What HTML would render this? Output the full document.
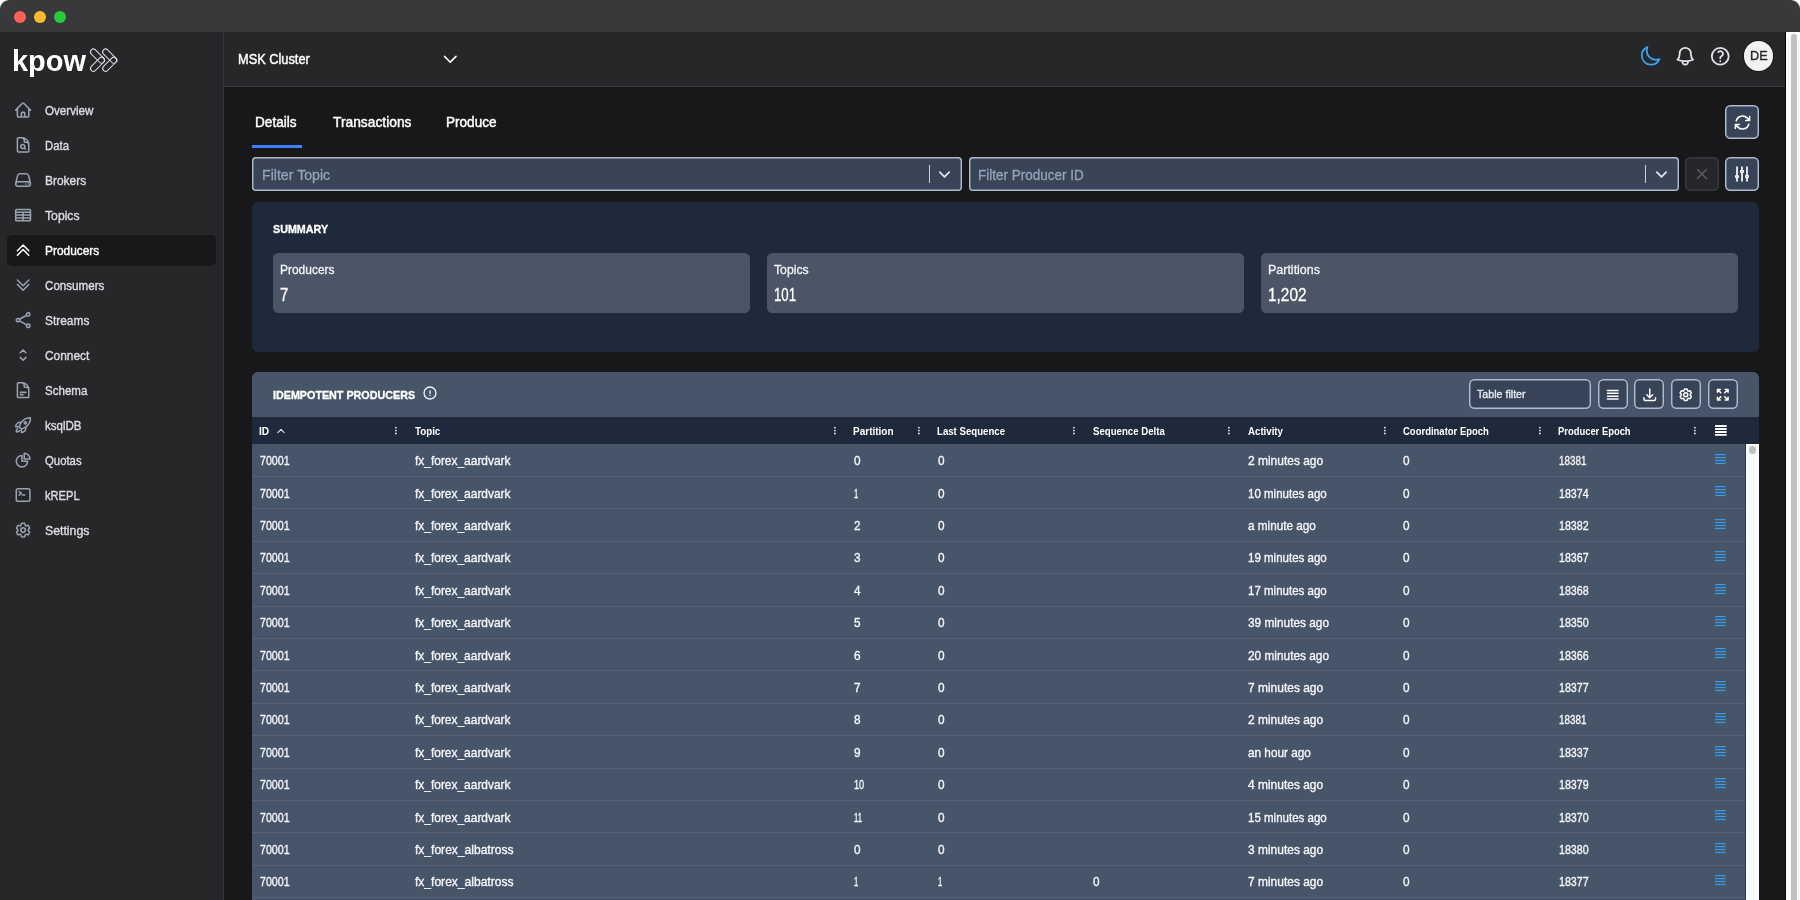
<!DOCTYPE html>
<html lang="en"><head><meta charset="utf-8"><title>Kpow - Producers</title>
<style>
html,body{margin:0;padding:0;background:#fff;}
body{width:1800px;height:900px;overflow:hidden;position:relative;font-family:"Liberation Sans",sans-serif;}
#app{position:absolute;left:0;top:0;width:1800px;height:900px;overflow:hidden;will-change:transform;}
#app>div,#app>svg,#app>span{position:absolute;}
.t{white-space:nowrap;line-height:1;transform-origin:0 50%;display:block;}
</style></head>
<body><div id="app">
<div style="left:0px;top:0px;width:1800px;height:32px;background:#38393b;border-radius:9px 9px 0 0;"></div>
<div style="left:14px;top:11px;width:12px;height:12px;background:#ff5f57;border-radius:50%;"></div>
<div style="left:34px;top:11px;width:12px;height:12px;background:#febc2e;border-radius:50%;"></div>
<div style="left:54px;top:11px;width:12px;height:12px;background:#28c840;border-radius:50%;"></div>
<div style="left:0px;top:32px;width:224px;height:868px;background:#27272a;"></div>
<div style="left:223px;top:32px;width:1px;height:868px;background:#37373b;"></div>
<div style="left:224px;top:32px;width:1562px;height:53.5px;background:#27272a;"></div>
<div style="left:224px;top:85.5px;width:1562px;height:1px;background:#3a3a3e;"></div>
<div style="left:224px;top:86.5px;width:1562px;height:813.5px;background:#18181b;"></div>
<div style="left:1785px;top:32px;width:1px;height:868px;background:#050506;"></div>
<div style="left:1786px;top:32px;width:14px;height:868px;background:#fafafa;"></div>
<div style="left:1790.6px;top:34.2px;width:6.4px;height:870px;background:#c1c1c1;border-radius:3.2px;"></div>
<span class="t" style="left:12.20px;top:45.91px;font-size:30px;color:#fff;transform:scaleX(0.9635);font-weight:700;">kpow</span>
<svg style="left:86px;top:44px" width="38" height="32" viewBox="86 44 38 32" fill="none" stroke="#dcdce0" stroke-width="1.05">
<g id="chv"><rect x="-8.7" y="-2.9" width="17.4" height="5.8" rx="2.9" transform="translate(97.5 56.1) rotate(45)"/>
<rect x="-8.7" y="-2.9" width="17.4" height="5.8" rx="2.9" transform="translate(97.5 64.3) rotate(-45)"/></g>
<use href="#chv" x="12.2"/></svg>
<svg style="left:13.70px;top:101.20px" width="18.2" height="18.2" viewBox="0 0 24 24" fill="none" stroke="#9aa3b2" stroke-width="2.0" stroke-linecap="round" stroke-linejoin="round"><path d="M2.25 12l8.954-8.955c.44-.439 1.152-.439 1.591 0L21.75 12M4.5 9.75v10.125c0 .621.504 1.125 1.125 1.125H9.75v-4.875c0-.621.504-1.125 1.125-1.125h2.25c.621 0 1.125.504 1.125 1.125V21h4.125c.621 0 1.125-.504 1.125-1.125V9.75M8.25 21h8.25"/></svg>
<span class="t" style="left:45.20px;top:104.26px;font-size:13.4px;color:#dddde1;transform:scaleX(0.8662);-webkit-text-stroke:0.4px #dddde1;">Overview</span>
<svg style="left:13.70px;top:136.20px" width="18.2" height="18.2" viewBox="0 0 24 24" fill="none" stroke="#9aa3b2" stroke-width="2.0" stroke-linecap="round" stroke-linejoin="round"><path d="M19.5 14.25v-2.625a3.375 3.375 0 00-3.375-3.375h-1.5A1.125 1.125 0 0113.5 7.125v-1.5a3.375 3.375 0 00-3.375-3.375H8.25m5.231 13.481L15 17.25m-4.5-15H5.625c-.621 0-1.125.504-1.125 1.125v16.5c0 .621.504 1.125 1.125 1.125h12.75c.621 0 1.125-.504 1.125-1.125V11.25a9 9 0 00-9-9zm3.75 11.625a2.625 2.625 0 11-5.25 0 2.625 2.625 0 015.25 0z"/></svg>
<span class="t" style="left:45.20px;top:139.26px;font-size:13.4px;color:#dddde1;transform:scaleX(0.8468);-webkit-text-stroke:0.4px #dddde1;">Data</span>
<svg style="left:13.70px;top:171.20px" width="18.2" height="18.2" viewBox="0 0 24 24" fill="none" stroke="#9aa3b2" stroke-width="2.0" stroke-linecap="round" stroke-linejoin="round"><path d="M21.75 17.25v-.228a4.5 4.5 0 00-.12-1.03l-2.268-9.64a3.375 3.375 0 00-3.285-2.602H7.923a3.375 3.375 0 00-3.285 2.602l-2.268 9.64a4.5 4.5 0 00-.12 1.03v.228m19.5 0a3 3 0 01-3 3H5.25a3 3 0 01-3-3m19.5 0a3 3 0 00-3-3H5.25a3 3 0 00-3 3m16.5 0h.008v.008h-.008v-.008zm-3 0h.008v.008h-.008v-.008z"/></svg>
<span class="t" style="left:45.20px;top:174.26px;font-size:13.4px;color:#dddde1;transform:scaleX(0.8925);-webkit-text-stroke:0.4px #dddde1;">Brokers</span>
<svg style="left:13.70px;top:206.20px" width="18.2" height="18.2" viewBox="0 0 24 24" fill="none" stroke="#9aa3b2" stroke-width="2.0" stroke-linecap="round" stroke-linejoin="round"><path d="M3.375 4.5h17.25c.621 0 1.125.504 1.125 1.125v12.75c0 .621-.504 1.125-1.125 1.125H3.375a1.125 1.125 0 01-1.125-1.125V5.625c0-.621.504-1.125 1.125-1.125zM2.25 8.25h19.5M2.25 12h19.5M2.25 15.75h19.5M12 8.25V19.5"/></svg>
<span class="t" style="left:45.20px;top:209.26px;font-size:13.4px;color:#dddde1;transform:scaleX(0.9108);-webkit-text-stroke:0.4px #dddde1;">Topics</span>
<div style="left:7px;top:235px;width:209px;height:31px;background:#18181b;border-radius:5px;"></div>
<svg style="left:13.70px;top:241.20px" width="18.2" height="18.2" viewBox="0 0 24 24" fill="none" stroke="#fff" stroke-width="2.0" stroke-linecap="round" stroke-linejoin="round"><path d="M4.5 12.75l7.5-7.5 7.5 7.5m-15 6l7.5-7.5 7.5 7.5"/></svg>
<span class="t" style="left:45.20px;top:244.26px;font-size:13.4px;color:#fff;transform:scaleX(0.8886);-webkit-text-stroke:0.4px #fff;">Producers</span>
<svg style="left:13.70px;top:276.20px" width="18.2" height="18.2" viewBox="0 0 24 24" fill="none" stroke="#9aa3b2" stroke-width="2.0" stroke-linecap="round" stroke-linejoin="round"><path d="M19.5 5.25l-7.5 7.5-7.5-7.5m15 6l-7.5 7.5-7.5-7.5"/></svg>
<span class="t" style="left:45.20px;top:279.26px;font-size:13.4px;color:#dddde1;transform:scaleX(0.8666);-webkit-text-stroke:0.4px #dddde1;">Consumers</span>
<svg style="left:13.70px;top:311.20px" width="18.2" height="18.2" viewBox="0 0 24 24" fill="none" stroke="#9aa3b2" stroke-width="2.0" stroke-linecap="round" stroke-linejoin="round"><path d="M7.217 10.907a2.25 2.25 0 100 2.186m0-2.186c.18.324.283.696.283 1.093s-.103.77-.283 1.093m0-2.186l9.566-5.314m-9.566 7.5l9.566 5.314m0 0a2.25 2.25 0 103.935 2.186 2.25 2.25 0 00-3.935-2.186zm0-12.814a2.25 2.25 0 103.933-2.185 2.25 2.25 0 00-3.933 2.185z"/></svg>
<span class="t" style="left:45.20px;top:314.26px;font-size:13.4px;color:#dddde1;transform:scaleX(0.8895);-webkit-text-stroke:0.4px #dddde1;">Streams</span>
<svg style="left:13.70px;top:346.20px" width="18.2" height="18.2" viewBox="0 0 24 24" fill="none" stroke="#9aa3b2" stroke-width="2.0" stroke-linecap="round" stroke-linejoin="round"><path d="M8.25 15L12 18.75 15.75 15m-7.5-6L12 5.25 15.75 9"/></svg>
<span class="t" style="left:45.20px;top:349.26px;font-size:13.4px;color:#dddde1;transform:scaleX(0.8895);-webkit-text-stroke:0.4px #dddde1;">Connect</span>
<svg style="left:13.70px;top:381.20px" width="18.2" height="18.2" viewBox="0 0 24 24" fill="none" stroke="#9aa3b2" stroke-width="2.0" stroke-linecap="round" stroke-linejoin="round"><path d="M19.5 14.25v-2.625a3.375 3.375 0 00-3.375-3.375h-1.5A1.125 1.125 0 0113.5 7.125v-1.5a3.375 3.375 0 00-3.375-3.375H8.25m0 12.75h7.5m-7.5 3H12M10.5 2.25H5.625c-.621 0-1.125.504-1.125 1.125v17.25c0 .621.504 1.125 1.125 1.125h12.75c.621 0 1.125-.504 1.125-1.125V11.25a9 9 0 00-9-9z"/></svg>
<span class="t" style="left:45.20px;top:384.26px;font-size:13.4px;color:#dddde1;transform:scaleX(0.8622);-webkit-text-stroke:0.4px #dddde1;">Schema</span>
<svg style="left:13.70px;top:416.20px" width="18.2" height="18.2" viewBox="0 0 24 24" fill="none" stroke="#9aa3b2" stroke-width="2.0" stroke-linecap="round" stroke-linejoin="round"><path d="M15.59 14.37a6 6 0 01-5.84 7.38v-4.8m5.84-2.58a14.98 14.98 0 006.16-12.12A14.98 14.98 0 009.631 8.41m5.96 5.96a14.926 14.926 0 01-5.841 2.58m-.119-8.54a6 6 0 00-7.381 5.84h4.8m2.581-5.84a14.927 14.927 0 00-2.58 5.84m2.699 2.7c-.103.021-.207.041-.311.06a15.09 15.09 0 01-2.448-2.448 14.9 14.9 0 01.06-.312m-2.24 2.39a4.493 4.493 0 00-1.757 4.306 4.493 4.493 0 004.306-1.758M16.5 9a1.5 1.5 0 11-3 0 1.5 1.5 0 013 0z"/></svg>
<span class="t" style="left:45.20px;top:419.26px;font-size:13.4px;color:#dddde1;transform:scaleX(0.8616);-webkit-text-stroke:0.4px #dddde1;">ksqlDB</span>
<svg style="left:13.70px;top:451.20px" width="18.2" height="18.2" viewBox="0 0 24 24" fill="none" stroke="#9aa3b2" stroke-width="2.0" stroke-linecap="round" stroke-linejoin="round"><path d="M10.5 6a7.5 7.5 0 107.5 7.5h-7.5V6z"/><path d="M13.5 10.5H21A7.5 7.5 0 0013.5 3v7.5z"/></svg>
<span class="t" style="left:45.20px;top:454.26px;font-size:13.4px;color:#dddde1;transform:scaleX(0.8469);-webkit-text-stroke:0.4px #dddde1;">Quotas</span>
<svg style="left:13.70px;top:486.20px" width="18.2" height="18.2" viewBox="0 0 24 24" fill="none" stroke="#9aa3b2" stroke-width="2.0" stroke-linecap="round" stroke-linejoin="round"><path d="M6.75 7.5l3 2.25-3 2.25m4.5 0h3m-9 8.25h13.5A2.25 2.25 0 0021 18V6a2.25 2.25 0 00-2.25-2.25H5.25A2.25 2.25 0 003 6v12a2.25 2.25 0 002.25 2.25z"/></svg>
<span class="t" style="left:45.20px;top:489.26px;font-size:13.4px;color:#dddde1;transform:scaleX(0.8303);-webkit-text-stroke:0.4px #dddde1;">kREPL</span>
<svg style="left:13.70px;top:521.20px" width="18.2" height="18.2" viewBox="0 0 24 24" fill="none" stroke="#9aa3b2" stroke-width="2.0" stroke-linecap="round" stroke-linejoin="round"><path d="M9.594 3.94c.09-.542.56-.94 1.11-.94h2.593c.55 0 1.02.398 1.11.94l.213 1.281c.063.374.313.686.645.87.074.04.147.083.22.127.324.196.72.257 1.075.124l1.217-.456a1.125 1.125 0 011.37.49l1.296 2.247a1.125 1.125 0 01-.26 1.431l-1.003.827c-.293.24-.438.613-.431.992a6.759 6.759 0 010 .255c-.007.378.138.75.43.99l1.005.828c.424.35.534.954.26 1.43l-1.298 2.247a1.125 1.125 0 01-1.369.491l-1.217-.456c-.355-.133-.75-.072-1.076.124a6.57 6.57 0 01-.22.128c-.331.183-.581.495-.644.869l-.213 1.28c-.09.543-.56.941-1.11.941h-2.594c-.55 0-1.02-.398-1.11-.94l-.213-1.281c-.062-.374-.312-.686-.644-.87a6.52 6.52 0 01-.22-.127c-.325-.196-.72-.257-1.076-.124l-1.217.456a1.125 1.125 0 01-1.369-.49l-1.297-2.247a1.125 1.125 0 01.26-1.431l1.004-.827c.292-.24.437-.613.43-.992a6.932 6.932 0 010-.255c.007-.378-.138-.75-.43-.99l-1.004-.828a1.125 1.125 0 01-.26-1.43l1.297-2.247a1.125 1.125 0 011.37-.491l1.216.456c.356.133.751.072 1.076-.124.072-.044.146-.087.22-.128.332-.183.582-.495.644-.869l.214-1.281z"/><path d="M15 12a3 3 0 11-6 0 3 3 0 016 0z"/></svg>
<span class="t" style="left:45.20px;top:524.26px;font-size:13.4px;color:#dddde1;transform:scaleX(0.9166);-webkit-text-stroke:0.4px #dddde1;">Settings</span>
<span class="t" style="left:238.03px;top:50.66px;font-size:15.4px;color:#fff;transform:scaleX(0.8309);-webkit-text-stroke:0.45px #fff;">MSK Cluster</span>
<svg style="left:440.75px;top:49.95px" width="18.5" height="18.5" viewBox="0 0 24 24" fill="none" stroke="#fff" stroke-width="2.0" stroke-linecap="round" stroke-linejoin="round"><path d="M19.5 8.25l-7.5 7.5-7.5-7.5"/></svg>
<svg style="left:1639.25px;top:44.75px" width="22.5" height="22.5" viewBox="0 0 24 24" fill="none" stroke="#38a5f0" stroke-width="1.9" stroke-linecap="round" stroke-linejoin="round"><path d="M21.752 15.002A9.718 9.718 0 0118 15.75c-5.385 0-9.75-4.365-9.75-9.75 0-1.33.266-2.597.748-3.752A9.753 9.753 0 003 11.25C3 16.635 7.365 21 12.75 21a9.753 9.753 0 009.002-5.998z"/></svg>
<svg style="left:1674.25px;top:44.75px" width="22.5" height="22.5" viewBox="0 0 24 24" fill="none" stroke="#e4e4e7" stroke-width="1.9" stroke-linecap="round" stroke-linejoin="round"><path d="M14.857 17.082a23.848 23.848 0 005.454-1.31A8.967 8.967 0 0118 9.75v-.7V9A6 6 0 006 9v.75a8.967 8.967 0 01-2.312 6.022c1.733.64 3.56 1.085 5.455 1.31m5.714 0a24.255 24.255 0 01-5.714 0m5.714 0a3 3 0 11-5.714 0"/></svg>
<svg style="left:1708.75px;top:44.75px" width="22.5" height="22.5" viewBox="0 0 24 24" fill="none" stroke="#e4e4e7" stroke-width="1.9" stroke-linecap="round" stroke-linejoin="round"><path d="M9.879 7.519c1.171-1.025 3.071-1.025 4.242 0 1.172 1.025 1.172 2.687 0 3.712-.203.179-.43.326-.67.442-.745.361-1.45.999-1.45 1.827v.75M21 12a9 9 0 11-18 0 9 9 0 0118 0zm-9 5.25h.008v.008H12v-.008z"/></svg>
<div style="left:1743.7px;top:41.2px;width:29.6px;height:29.6px;background:#f1f1f2;border-radius:50%;box-shadow:0 0 0 1px #19191c;"></div>
<span class="t" style="left:1749.77px;top:49.66px;font-size:12.8px;color:#27272a;transform:scaleX(0.9920);-webkit-text-stroke:0.35px #27272a;">DE</span>
<span class="t" style="left:255.32px;top:114.20px;font-size:15px;color:#fff;transform:scaleX(0.9067);-webkit-text-stroke:0.45px #fff;">Details</span>
<span class="t" style="left:332.62px;top:114.20px;font-size:15px;color:#fff;transform:scaleX(0.9203);-webkit-text-stroke:0.45px #fff;">Transactions</span>
<span class="t" style="left:446.33px;top:114.20px;font-size:15px;color:#fff;transform:scaleX(0.9047);-webkit-text-stroke:0.45px #fff;">Produce</span>
<div style="left:252px;top:145px;width:49.7px;height:2.8px;background:#3b82f6;"></div>
<div style="left:1725px;top:105px;width:34px;height:34px;background:#374357;box-shadow:inset 0 0 0 1.45px #aebbcf;border-radius:5.5px;"></div>
<svg style="left:1732.50px;top:112.50px" width="19" height="19" viewBox="0 0 24 24" fill="none" stroke="#fff" stroke-width="1.9" stroke-linecap="round" stroke-linejoin="round"><path d="M16.023 9.348h4.992v-.001M2.985 19.644v-4.992m0 0h4.992m-4.993 0l3.181 3.183a8.25 8.25 0 0013.803-3.7M4.031 9.865a8.25 8.25 0 0113.803-3.7l3.181 3.182m0-4.991v4.99"/></svg>
<div style="left:252px;top:157px;width:710px;height:34px;background:#394456;box-shadow:inset 0 0 0 1.45px #aebbcf;border-radius:5.5px;border-radius:4px;"></div>
<span class="t" style="left:261.75px;top:167.84px;font-size:14.6px;color:#94a3b8;transform:scaleX(0.9701);-webkit-text-stroke:0.3px #94a3b8;">Filter Topic</span>
<div style="left:928.5px;top:165px;width:1px;height:18px;background:#cbd5e1;"></div>
<svg style="left:937.00px;top:167.10px" width="15" height="15" viewBox="0 0 24 24" fill="none" stroke="#e2e8f0" stroke-width="2.7" stroke-linecap="round" stroke-linejoin="round"><path d="M19.5 8.25l-7.5 7.5-7.5-7.5"/></svg>
<div style="left:968.5px;top:157px;width:710.5px;height:34px;background:#394456;box-shadow:inset 0 0 0 1.45px #aebbcf;border-radius:5.5px;border-radius:4px;"></div>
<span class="t" style="left:978.45px;top:167.84px;font-size:14.6px;color:#94a3b8;transform:scaleX(0.9240);-webkit-text-stroke:0.3px #94a3b8;">Filter Producer ID</span>
<div style="left:1645px;top:165px;width:1px;height:18px;background:#cbd5e1;"></div>
<svg style="left:1654.00px;top:167.10px" width="15" height="15" viewBox="0 0 24 24" fill="none" stroke="#e2e8f0" stroke-width="2.7" stroke-linecap="round" stroke-linejoin="round"><path d="M19.5 8.25l-7.5 7.5-7.5-7.5"/></svg>
<div style="left:1685.2px;top:157px;width:34px;height:34px;background:#26272b;box-shadow:inset 0 0 0 1.45px #39393e;border-radius:5.5px;"></div>
<svg style="left:1693.00px;top:165.00px" width="18" height="18" viewBox="0 0 24 24" fill="none" stroke="#5d5d64" stroke-width="1.9" stroke-linecap="round" stroke-linejoin="round"><path d="M6 18L18 6M6 6l12 12"/></svg>
<div style="left:1725px;top:157px;width:34px;height:34px;background:#374357;box-shadow:inset 0 0 0 1.45px #aebbcf;border-radius:5.5px;"></div>
<svg style="left:1732.40px;top:164.00px" width="20" height="20" viewBox="0 0 24 24" fill="none" stroke="#fff" stroke-width="2.0" stroke-linecap="round" stroke-linejoin="round"><path d="M6 13.5V3.75m0 9.75a1.5 1.5 0 010 3m0-3a1.5 1.5 0 000 3m0 3.75V16.5m12-3V3.75m0 9.75a1.5 1.5 0 010 3m0-3a1.5 1.5 0 000 3m0 3.75V16.5m-6-9V3.75m0 3.75a1.5 1.5 0 010 3m0-3a1.5 1.5 0 000 3m0 9.75V10.5"/></svg>
<div style="left:252px;top:201.5px;width:1507px;height:150.5px;background:#1e293b;border-radius:6px;"></div>
<span class="t" style="left:273.28px;top:223.00px;font-size:11.7px;color:#fff;transform:scaleX(0.9188);font-weight:700;-webkit-text-stroke:0.35px #fff;">SUMMARY</span>
<div style="left:273px;top:253px;width:477px;height:60.3px;background:#4b5565;border-radius:5.5px;"></div>
<span class="t" style="left:280.35px;top:263.49px;font-size:13.6px;color:#f1f5f9;transform:scaleX(0.8804);-webkit-text-stroke:0.3px #f1f5f9;">Producers</span>
<span class="t" style="left:280.35px;top:286.11px;font-size:18.3px;color:#fff;transform:scaleX(0.8172);-webkit-text-stroke:0.3px #fff;">7</span>
<div style="left:767px;top:253px;width:477px;height:60.3px;background:#4b5565;border-radius:5.5px;"></div>
<span class="t" style="left:774.35px;top:263.49px;font-size:13.6px;color:#f1f5f9;transform:scaleX(0.9000);-webkit-text-stroke:0.3px #f1f5f9;">Topics</span>
<span class="t" style="left:774.35px;top:286.11px;font-size:18.3px;color:#fff;transform:scaleX(0.7231);-webkit-text-stroke:0.3px #fff;">101</span>
<div style="left:1261px;top:253px;width:477px;height:60.3px;background:#4b5565;border-radius:5.5px;"></div>
<span class="t" style="left:1268.35px;top:263.49px;font-size:13.6px;color:#f1f5f9;transform:scaleX(0.9169);-webkit-text-stroke:0.3px #f1f5f9;">Partitions</span>
<span class="t" style="left:1268.35px;top:286.11px;font-size:18.3px;color:#fff;transform:scaleX(0.8442);-webkit-text-stroke:0.3px #fff;">1,202</span>
<div style="left:252px;top:372.3px;width:1507px;height:527.7px;background:#475569;border-radius:6px 6px 0 0;"></div>
<span class="t" style="left:273.48px;top:389.30px;font-size:11.7px;color:#fff;transform:scaleX(0.9193);font-weight:700;-webkit-text-stroke:0.35px #fff;">IDEMPOTENT PRODUCERS</span>
<svg style="left:421.90px;top:384.90px" width="16" height="16" viewBox="0 0 24 24" fill="none" stroke="#eef2f7" stroke-width="2.0" stroke-linecap="round" stroke-linejoin="round"><path d="M12 9v3.75m9-.75a9 9 0 11-18 0 9 9 0 0118 0zm-9 3.75h.008v.008H12v-.008z"/></svg>
<div style="left:1469px;top:379.3px;width:121.7px;height:30px;background:#374357;box-shadow:inset 0 0 0 1.45px #aebbcf;border-radius:5.5px;"></div>
<span class="t" style="left:1477.00px;top:389.31px;font-size:11.8px;color:#e2e8f0;transform:scaleX(0.9032);-webkit-text-stroke:0.4px #e2e8f0;">Table filter</span>
<div style="left:1597.7px;top:379.3px;width:30px;height:30px;background:#374357;box-shadow:inset 0 0 0 1.45px #aebbcf;border-radius:5.5px;"></div>
<svg style="left:1604.95px;top:387.25px" width="15.5" height="15.5" viewBox="0 0 24 24" fill="none" stroke="#fff" stroke-width="2.3" stroke-linecap="round" stroke-linejoin="round"><path d="M3.75 5.25h16.5m-16.5 4.5h16.5m-16.5 4.5h16.5m-16.5 4.5h16.5"/></svg>
<div style="left:1634.4px;top:379.3px;width:30px;height:30px;background:#374357;box-shadow:inset 0 0 0 1.45px #aebbcf;border-radius:5.5px;"></div>
<svg style="left:1641.65px;top:387.25px" width="15.5" height="15.5" viewBox="0 0 24 24" fill="none" stroke="#fff" stroke-width="2.3" stroke-linecap="round" stroke-linejoin="round"><path d="M3 16.5v2.25A2.25 2.25 0 005.25 21h13.5A2.25 2.25 0 0021 18.75V16.5M16.5 12L12 16.5m0 0L7.5 12m4.5 4.5V3"/></svg>
<div style="left:1671px;top:379.3px;width:30px;height:30px;background:#374357;box-shadow:inset 0 0 0 1.45px #aebbcf;border-radius:5.5px;"></div>
<svg style="left:1678.25px;top:387.25px" width="15.5" height="15.5" viewBox="0 0 24 24" fill="none" stroke="#fff" stroke-width="2.3" stroke-linecap="round" stroke-linejoin="round"><path d="M9.594 3.94c.09-.542.56-.94 1.11-.94h2.593c.55 0 1.02.398 1.11.94l.213 1.281c.063.374.313.686.645.87.074.04.147.083.22.127.324.196.72.257 1.075.124l1.217-.456a1.125 1.125 0 011.37.49l1.296 2.247a1.125 1.125 0 01-.26 1.431l-1.003.827c-.293.24-.438.613-.431.992a6.759 6.759 0 010 .255c-.007.378.138.75.43.99l1.005.828c.424.35.534.954.26 1.43l-1.298 2.247a1.125 1.125 0 01-1.369.491l-1.217-.456c-.355-.133-.75-.072-1.076.124a6.57 6.57 0 01-.22.128c-.331.183-.581.495-.644.869l-.213 1.28c-.09.543-.56.941-1.11.941h-2.594c-.55 0-1.02-.398-1.11-.94l-.213-1.281c-.062-.374-.312-.686-.644-.87a6.52 6.52 0 01-.22-.127c-.325-.196-.72-.257-1.076-.124l-1.217.456a1.125 1.125 0 01-1.369-.49l-1.297-2.247a1.125 1.125 0 01.26-1.431l1.004-.827c.292-.24.437-.613.43-.992a6.932 6.932 0 010-.255c.007-.378-.138-.75-.43-.99l-1.004-.828a1.125 1.125 0 01-.26-1.43l1.297-2.247a1.125 1.125 0 011.37-.491l1.216.456c.356.133.751.072 1.076-.124.072-.044.146-.087.22-.128.332-.183.582-.495.644-.869l.214-1.281z"/><path d="M15 12a3 3 0 11-6 0 3 3 0 016 0z"/></svg>
<div style="left:1707.7px;top:379.3px;width:30px;height:30px;background:#374357;box-shadow:inset 0 0 0 1.45px #aebbcf;border-radius:5.5px;"></div>
<svg style="left:1714.95px;top:387.25px" width="15.5" height="15.5" viewBox="0 0 24 24" fill="none" stroke="#fff" stroke-width="2.3" stroke-linecap="round" stroke-linejoin="round"><path d="M3.75 3.75v4.5m0-4.5h4.5m-4.5 0L9 9M3.75 20.25v-4.5m0 4.5h4.5m-4.5 0L9 15M20.25 3.75h-4.5m4.5 0v4.5m0-4.5L15 9m5.25 11.25h-4.5m4.5 0v-4.5m0 4.5L15 15"/></svg>
<div style="left:252px;top:416.7px;width:1507px;height:27.3px;background:#1e293b;"></div>
<span class="t" style="left:259.30px;top:424.70px;font-size:11.7px;color:#fff;transform:scaleX(0.8718);font-weight:700;">ID</span>
<svg style="left:393.20px;top:424.00px" width="6" height="14" viewBox="0 0 6 14"><circle cx="2.9" cy="3.7" r="0.9" fill="#e8edf3"/><circle cx="2.9" cy="6.6" r="0.9" fill="#e8edf3"/><circle cx="2.9" cy="9.5" r="0.9" fill="#e8edf3"/></svg>
<span class="t" style="left:414.50px;top:424.70px;font-size:11.7px;color:#fff;transform:scaleX(0.8349);font-weight:700;">Topic</span>
<svg style="left:832.00px;top:424.00px" width="6" height="14" viewBox="0 0 6 14"><circle cx="2.9" cy="3.7" r="0.9" fill="#e8edf3"/><circle cx="2.9" cy="6.6" r="0.9" fill="#e8edf3"/><circle cx="2.9" cy="9.5" r="0.9" fill="#e8edf3"/></svg>
<span class="t" style="left:853.30px;top:424.70px;font-size:11.7px;color:#fff;transform:scaleX(0.8558);font-weight:700;">Partition</span>
<svg style="left:916.00px;top:424.00px" width="6" height="14" viewBox="0 0 6 14"><circle cx="2.9" cy="3.7" r="0.9" fill="#e8edf3"/><circle cx="2.9" cy="6.6" r="0.9" fill="#e8edf3"/><circle cx="2.9" cy="9.5" r="0.9" fill="#e8edf3"/></svg>
<span class="t" style="left:937.30px;top:424.70px;font-size:11.7px;color:#fff;transform:scaleX(0.8244);font-weight:700;">Last Sequence</span>
<svg style="left:1071.20px;top:424.00px" width="6" height="14" viewBox="0 0 6 14"><circle cx="2.9" cy="3.7" r="0.9" fill="#e8edf3"/><circle cx="2.9" cy="6.6" r="0.9" fill="#e8edf3"/><circle cx="2.9" cy="9.5" r="0.9" fill="#e8edf3"/></svg>
<span class="t" style="left:1092.50px;top:424.70px;font-size:11.7px;color:#fff;transform:scaleX(0.8243);font-weight:700;">Sequence Delta</span>
<svg style="left:1226.40px;top:424.00px" width="6" height="14" viewBox="0 0 6 14"><circle cx="2.9" cy="3.7" r="0.9" fill="#e8edf3"/><circle cx="2.9" cy="6.6" r="0.9" fill="#e8edf3"/><circle cx="2.9" cy="9.5" r="0.9" fill="#e8edf3"/></svg>
<span class="t" style="left:1247.70px;top:424.70px;font-size:11.7px;color:#fff;transform:scaleX(0.8287);font-weight:700;">Activity</span>
<svg style="left:1381.60px;top:424.00px" width="6" height="14" viewBox="0 0 6 14"><circle cx="2.9" cy="3.7" r="0.9" fill="#e8edf3"/><circle cx="2.9" cy="6.6" r="0.9" fill="#e8edf3"/><circle cx="2.9" cy="9.5" r="0.9" fill="#e8edf3"/></svg>
<span class="t" style="left:1402.90px;top:424.70px;font-size:11.7px;color:#fff;transform:scaleX(0.8118);font-weight:700;">Coordinator Epoch</span>
<svg style="left:1536.80px;top:424.00px" width="6" height="14" viewBox="0 0 6 14"><circle cx="2.9" cy="3.7" r="0.9" fill="#e8edf3"/><circle cx="2.9" cy="6.6" r="0.9" fill="#e8edf3"/><circle cx="2.9" cy="9.5" r="0.9" fill="#e8edf3"/></svg>
<span class="t" style="left:1558.10px;top:424.70px;font-size:11.7px;color:#fff;transform:scaleX(0.8044);font-weight:700;">Producer Epoch</span>
<svg style="left:1692.00px;top:424.00px" width="6" height="14" viewBox="0 0 6 14"><circle cx="2.9" cy="3.7" r="0.9" fill="#e8edf3"/><circle cx="2.9" cy="6.6" r="0.9" fill="#e8edf3"/><circle cx="2.9" cy="9.5" r="0.9" fill="#e8edf3"/></svg>
<svg style="left:275.80px;top:426.30px" width="10" height="10" viewBox="0 0 24 24" fill="none" stroke="#e2e8f0" stroke-width="2.6" stroke-linecap="round" stroke-linejoin="round"><path d="M4.5 15.75l7.5-7.5 7.5 7.5"/></svg>
<svg style="left:1713.80px;top:424.00px" width="14" height="14" viewBox="0 0 14 14"><rect x="1" y="1.10" width="11.8" height="1.9" rx="0.6" fill="#fff"/><rect x="1" y="4.05" width="11.8" height="1.9" rx="0.6" fill="#fff"/><rect x="1" y="7.00" width="11.8" height="1.9" rx="0.6" fill="#fff"/><rect x="1" y="9.95" width="11.8" height="1.9" rx="0.6" fill="#fff"/></svg>
<span class="t" style="left:259.78px;top:455.26px;font-size:12.8px;color:#f4f7fa;transform:scaleX(0.8332);-webkit-text-stroke:0.35px #f4f7fa;">70001</span>
<span class="t" style="left:414.77px;top:455.26px;font-size:12.8px;color:#f4f7fa;transform:scaleX(0.9329);-webkit-text-stroke:0.35px #f4f7fa;">fx_forex_aardvark</span>
<span class="t" style="left:853.77px;top:455.26px;font-size:12.8px;color:#f4f7fa;transform:scaleX(0.9220);-webkit-text-stroke:0.35px #f4f7fa;">0</span>
<span class="t" style="left:937.77px;top:455.26px;font-size:12.8px;color:#f4f7fa;transform:scaleX(0.9220);-webkit-text-stroke:0.35px #f4f7fa;">0</span>
<span class="t" style="left:1247.98px;top:455.26px;font-size:12.8px;color:#f4f7fa;transform:scaleX(0.9349);-webkit-text-stroke:0.35px #f4f7fa;">2 minutes ago</span>
<span class="t" style="left:1403.37px;top:455.26px;font-size:12.8px;color:#f4f7fa;transform:scaleX(0.9220);-webkit-text-stroke:0.35px #f4f7fa;">0</span>
<span class="t" style="left:1558.57px;top:455.26px;font-size:12.8px;color:#f4f7fa;transform:scaleX(0.7686);-webkit-text-stroke:0.35px #f4f7fa;">18381</span>
<svg style="left:1714.00px;top:453.00px" width="13" height="13" viewBox="0 0 13 13"><rect x="1" y="1.00" width="10.7" height="1.25" fill="#369ae9"/><rect x="1" y="3.95" width="10.7" height="1.25" fill="#369ae9"/><rect x="1" y="6.90" width="10.7" height="1.25" fill="#369ae9"/><rect x="1" y="9.85" width="10.7" height="1.25" fill="#369ae9"/></svg>
<div style="left:252px;top:475.9px;width:1493.5px;height:1px;background:#566479;"></div>
<span class="t" style="left:259.78px;top:487.66px;font-size:12.8px;color:#f4f7fa;transform:scaleX(0.8332);-webkit-text-stroke:0.35px #f4f7fa;">70001</span>
<span class="t" style="left:414.77px;top:487.66px;font-size:12.8px;color:#f4f7fa;transform:scaleX(0.9329);-webkit-text-stroke:0.35px #f4f7fa;">fx_forex_aardvark</span>
<span class="t" style="left:853.77px;top:487.66px;font-size:12.8px;color:#f4f7fa;transform:scaleX(0.6000);-webkit-text-stroke:0.35px #f4f7fa;">1</span>
<span class="t" style="left:937.77px;top:487.66px;font-size:12.8px;color:#f4f7fa;transform:scaleX(0.9220);-webkit-text-stroke:0.35px #f4f7fa;">0</span>
<span class="t" style="left:1247.98px;top:487.66px;font-size:12.8px;color:#f4f7fa;transform:scaleX(0.8995);-webkit-text-stroke:0.35px #f4f7fa;">10 minutes ago</span>
<span class="t" style="left:1403.37px;top:487.66px;font-size:12.8px;color:#f4f7fa;transform:scaleX(0.9220);-webkit-text-stroke:0.35px #f4f7fa;">0</span>
<span class="t" style="left:1558.57px;top:487.66px;font-size:12.8px;color:#f4f7fa;transform:scaleX(0.8332);-webkit-text-stroke:0.35px #f4f7fa;">18374</span>
<svg style="left:1714.00px;top:485.40px" width="13" height="13" viewBox="0 0 13 13"><rect x="1" y="1.00" width="10.7" height="1.25" fill="#369ae9"/><rect x="1" y="3.95" width="10.7" height="1.25" fill="#369ae9"/><rect x="1" y="6.90" width="10.7" height="1.25" fill="#369ae9"/><rect x="1" y="9.85" width="10.7" height="1.25" fill="#369ae9"/></svg>
<div style="left:252px;top:508.3px;width:1493.5px;height:1px;background:#566479;"></div>
<span class="t" style="left:259.78px;top:520.06px;font-size:12.8px;color:#f4f7fa;transform:scaleX(0.8332);-webkit-text-stroke:0.35px #f4f7fa;">70001</span>
<span class="t" style="left:414.77px;top:520.06px;font-size:12.8px;color:#f4f7fa;transform:scaleX(0.9329);-webkit-text-stroke:0.35px #f4f7fa;">fx_forex_aardvark</span>
<span class="t" style="left:853.77px;top:520.06px;font-size:12.8px;color:#f4f7fa;transform:scaleX(0.9220);-webkit-text-stroke:0.35px #f4f7fa;">2</span>
<span class="t" style="left:937.77px;top:520.06px;font-size:12.8px;color:#f4f7fa;transform:scaleX(0.9220);-webkit-text-stroke:0.35px #f4f7fa;">0</span>
<span class="t" style="left:1247.98px;top:520.06px;font-size:12.8px;color:#f4f7fa;transform:scaleX(0.9171);-webkit-text-stroke:0.35px #f4f7fa;">a minute ago</span>
<span class="t" style="left:1403.37px;top:520.06px;font-size:12.8px;color:#f4f7fa;transform:scaleX(0.9220);-webkit-text-stroke:0.35px #f4f7fa;">0</span>
<span class="t" style="left:1558.57px;top:520.06px;font-size:12.8px;color:#f4f7fa;transform:scaleX(0.8332);-webkit-text-stroke:0.35px #f4f7fa;">18382</span>
<svg style="left:1714.00px;top:517.80px" width="13" height="13" viewBox="0 0 13 13"><rect x="1" y="1.00" width="10.7" height="1.25" fill="#369ae9"/><rect x="1" y="3.95" width="10.7" height="1.25" fill="#369ae9"/><rect x="1" y="6.90" width="10.7" height="1.25" fill="#369ae9"/><rect x="1" y="9.85" width="10.7" height="1.25" fill="#369ae9"/></svg>
<div style="left:252px;top:540.7px;width:1493.5px;height:1px;background:#566479;"></div>
<span class="t" style="left:259.78px;top:552.46px;font-size:12.8px;color:#f4f7fa;transform:scaleX(0.8332);-webkit-text-stroke:0.35px #f4f7fa;">70001</span>
<span class="t" style="left:414.77px;top:552.46px;font-size:12.8px;color:#f4f7fa;transform:scaleX(0.9329);-webkit-text-stroke:0.35px #f4f7fa;">fx_forex_aardvark</span>
<span class="t" style="left:853.77px;top:552.46px;font-size:12.8px;color:#f4f7fa;transform:scaleX(0.9220);-webkit-text-stroke:0.35px #f4f7fa;">3</span>
<span class="t" style="left:937.77px;top:552.46px;font-size:12.8px;color:#f4f7fa;transform:scaleX(0.9220);-webkit-text-stroke:0.35px #f4f7fa;">0</span>
<span class="t" style="left:1247.98px;top:552.46px;font-size:12.8px;color:#f4f7fa;transform:scaleX(0.8995);-webkit-text-stroke:0.35px #f4f7fa;">19 minutes ago</span>
<span class="t" style="left:1403.37px;top:552.46px;font-size:12.8px;color:#f4f7fa;transform:scaleX(0.9220);-webkit-text-stroke:0.35px #f4f7fa;">0</span>
<span class="t" style="left:1558.57px;top:552.46px;font-size:12.8px;color:#f4f7fa;transform:scaleX(0.8332);-webkit-text-stroke:0.35px #f4f7fa;">18367</span>
<svg style="left:1714.00px;top:550.20px" width="13" height="13" viewBox="0 0 13 13"><rect x="1" y="1.00" width="10.7" height="1.25" fill="#369ae9"/><rect x="1" y="3.95" width="10.7" height="1.25" fill="#369ae9"/><rect x="1" y="6.90" width="10.7" height="1.25" fill="#369ae9"/><rect x="1" y="9.85" width="10.7" height="1.25" fill="#369ae9"/></svg>
<div style="left:252px;top:573.1px;width:1493.5px;height:1px;background:#566479;"></div>
<span class="t" style="left:259.78px;top:584.86px;font-size:12.8px;color:#f4f7fa;transform:scaleX(0.8332);-webkit-text-stroke:0.35px #f4f7fa;">70001</span>
<span class="t" style="left:414.77px;top:584.86px;font-size:12.8px;color:#f4f7fa;transform:scaleX(0.9329);-webkit-text-stroke:0.35px #f4f7fa;">fx_forex_aardvark</span>
<span class="t" style="left:853.77px;top:584.86px;font-size:12.8px;color:#f4f7fa;transform:scaleX(0.9220);-webkit-text-stroke:0.35px #f4f7fa;">4</span>
<span class="t" style="left:937.77px;top:584.86px;font-size:12.8px;color:#f4f7fa;transform:scaleX(0.9220);-webkit-text-stroke:0.35px #f4f7fa;">0</span>
<span class="t" style="left:1247.98px;top:584.86px;font-size:12.8px;color:#f4f7fa;transform:scaleX(0.8995);-webkit-text-stroke:0.35px #f4f7fa;">17 minutes ago</span>
<span class="t" style="left:1403.37px;top:584.86px;font-size:12.8px;color:#f4f7fa;transform:scaleX(0.9220);-webkit-text-stroke:0.35px #f4f7fa;">0</span>
<span class="t" style="left:1558.57px;top:584.86px;font-size:12.8px;color:#f4f7fa;transform:scaleX(0.8332);-webkit-text-stroke:0.35px #f4f7fa;">18368</span>
<svg style="left:1714.00px;top:582.60px" width="13" height="13" viewBox="0 0 13 13"><rect x="1" y="1.00" width="10.7" height="1.25" fill="#369ae9"/><rect x="1" y="3.95" width="10.7" height="1.25" fill="#369ae9"/><rect x="1" y="6.90" width="10.7" height="1.25" fill="#369ae9"/><rect x="1" y="9.85" width="10.7" height="1.25" fill="#369ae9"/></svg>
<div style="left:252px;top:605.5px;width:1493.5px;height:1px;background:#566479;"></div>
<span class="t" style="left:259.78px;top:617.26px;font-size:12.8px;color:#f4f7fa;transform:scaleX(0.8332);-webkit-text-stroke:0.35px #f4f7fa;">70001</span>
<span class="t" style="left:414.77px;top:617.26px;font-size:12.8px;color:#f4f7fa;transform:scaleX(0.9329);-webkit-text-stroke:0.35px #f4f7fa;">fx_forex_aardvark</span>
<span class="t" style="left:853.77px;top:617.26px;font-size:12.8px;color:#f4f7fa;transform:scaleX(0.9220);-webkit-text-stroke:0.35px #f4f7fa;">5</span>
<span class="t" style="left:937.77px;top:617.26px;font-size:12.8px;color:#f4f7fa;transform:scaleX(0.9220);-webkit-text-stroke:0.35px #f4f7fa;">0</span>
<span class="t" style="left:1247.98px;top:617.26px;font-size:12.8px;color:#f4f7fa;transform:scaleX(0.9257);-webkit-text-stroke:0.35px #f4f7fa;">39 minutes ago</span>
<span class="t" style="left:1403.37px;top:617.26px;font-size:12.8px;color:#f4f7fa;transform:scaleX(0.9220);-webkit-text-stroke:0.35px #f4f7fa;">0</span>
<span class="t" style="left:1558.57px;top:617.26px;font-size:12.8px;color:#f4f7fa;transform:scaleX(0.8332);-webkit-text-stroke:0.35px #f4f7fa;">18350</span>
<svg style="left:1714.00px;top:615.00px" width="13" height="13" viewBox="0 0 13 13"><rect x="1" y="1.00" width="10.7" height="1.25" fill="#369ae9"/><rect x="1" y="3.95" width="10.7" height="1.25" fill="#369ae9"/><rect x="1" y="6.90" width="10.7" height="1.25" fill="#369ae9"/><rect x="1" y="9.85" width="10.7" height="1.25" fill="#369ae9"/></svg>
<div style="left:252px;top:637.9px;width:1493.5px;height:1px;background:#566479;"></div>
<span class="t" style="left:259.78px;top:649.66px;font-size:12.8px;color:#f4f7fa;transform:scaleX(0.8332);-webkit-text-stroke:0.35px #f4f7fa;">70001</span>
<span class="t" style="left:414.77px;top:649.66px;font-size:12.8px;color:#f4f7fa;transform:scaleX(0.9329);-webkit-text-stroke:0.35px #f4f7fa;">fx_forex_aardvark</span>
<span class="t" style="left:853.77px;top:649.66px;font-size:12.8px;color:#f4f7fa;transform:scaleX(0.9220);-webkit-text-stroke:0.35px #f4f7fa;">6</span>
<span class="t" style="left:937.77px;top:649.66px;font-size:12.8px;color:#f4f7fa;transform:scaleX(0.9220);-webkit-text-stroke:0.35px #f4f7fa;">0</span>
<span class="t" style="left:1247.98px;top:649.66px;font-size:12.8px;color:#f4f7fa;transform:scaleX(0.9257);-webkit-text-stroke:0.35px #f4f7fa;">20 minutes ago</span>
<span class="t" style="left:1403.37px;top:649.66px;font-size:12.8px;color:#f4f7fa;transform:scaleX(0.9220);-webkit-text-stroke:0.35px #f4f7fa;">0</span>
<span class="t" style="left:1558.57px;top:649.66px;font-size:12.8px;color:#f4f7fa;transform:scaleX(0.8332);-webkit-text-stroke:0.35px #f4f7fa;">18366</span>
<svg style="left:1714.00px;top:647.40px" width="13" height="13" viewBox="0 0 13 13"><rect x="1" y="1.00" width="10.7" height="1.25" fill="#369ae9"/><rect x="1" y="3.95" width="10.7" height="1.25" fill="#369ae9"/><rect x="1" y="6.90" width="10.7" height="1.25" fill="#369ae9"/><rect x="1" y="9.85" width="10.7" height="1.25" fill="#369ae9"/></svg>
<div style="left:252px;top:670.3px;width:1493.5px;height:1px;background:#566479;"></div>
<span class="t" style="left:259.78px;top:682.06px;font-size:12.8px;color:#f4f7fa;transform:scaleX(0.8332);-webkit-text-stroke:0.35px #f4f7fa;">70001</span>
<span class="t" style="left:414.77px;top:682.06px;font-size:12.8px;color:#f4f7fa;transform:scaleX(0.9329);-webkit-text-stroke:0.35px #f4f7fa;">fx_forex_aardvark</span>
<span class="t" style="left:853.77px;top:682.06px;font-size:12.8px;color:#f4f7fa;transform:scaleX(0.9220);-webkit-text-stroke:0.35px #f4f7fa;">7</span>
<span class="t" style="left:937.77px;top:682.06px;font-size:12.8px;color:#f4f7fa;transform:scaleX(0.9220);-webkit-text-stroke:0.35px #f4f7fa;">0</span>
<span class="t" style="left:1247.98px;top:682.06px;font-size:12.8px;color:#f4f7fa;transform:scaleX(0.9349);-webkit-text-stroke:0.35px #f4f7fa;">7 minutes ago</span>
<span class="t" style="left:1403.37px;top:682.06px;font-size:12.8px;color:#f4f7fa;transform:scaleX(0.9220);-webkit-text-stroke:0.35px #f4f7fa;">0</span>
<span class="t" style="left:1558.57px;top:682.06px;font-size:12.8px;color:#f4f7fa;transform:scaleX(0.8332);-webkit-text-stroke:0.35px #f4f7fa;">18377</span>
<svg style="left:1714.00px;top:679.80px" width="13" height="13" viewBox="0 0 13 13"><rect x="1" y="1.00" width="10.7" height="1.25" fill="#369ae9"/><rect x="1" y="3.95" width="10.7" height="1.25" fill="#369ae9"/><rect x="1" y="6.90" width="10.7" height="1.25" fill="#369ae9"/><rect x="1" y="9.85" width="10.7" height="1.25" fill="#369ae9"/></svg>
<div style="left:252px;top:702.7px;width:1493.5px;height:1px;background:#566479;"></div>
<span class="t" style="left:259.78px;top:714.46px;font-size:12.8px;color:#f4f7fa;transform:scaleX(0.8332);-webkit-text-stroke:0.35px #f4f7fa;">70001</span>
<span class="t" style="left:414.77px;top:714.46px;font-size:12.8px;color:#f4f7fa;transform:scaleX(0.9329);-webkit-text-stroke:0.35px #f4f7fa;">fx_forex_aardvark</span>
<span class="t" style="left:853.77px;top:714.46px;font-size:12.8px;color:#f4f7fa;transform:scaleX(0.9220);-webkit-text-stroke:0.35px #f4f7fa;">8</span>
<span class="t" style="left:937.77px;top:714.46px;font-size:12.8px;color:#f4f7fa;transform:scaleX(0.9220);-webkit-text-stroke:0.35px #f4f7fa;">0</span>
<span class="t" style="left:1247.98px;top:714.46px;font-size:12.8px;color:#f4f7fa;transform:scaleX(0.9349);-webkit-text-stroke:0.35px #f4f7fa;">2 minutes ago</span>
<span class="t" style="left:1403.37px;top:714.46px;font-size:12.8px;color:#f4f7fa;transform:scaleX(0.9220);-webkit-text-stroke:0.35px #f4f7fa;">0</span>
<span class="t" style="left:1558.57px;top:714.46px;font-size:12.8px;color:#f4f7fa;transform:scaleX(0.7686);-webkit-text-stroke:0.35px #f4f7fa;">18381</span>
<svg style="left:1714.00px;top:712.20px" width="13" height="13" viewBox="0 0 13 13"><rect x="1" y="1.00" width="10.7" height="1.25" fill="#369ae9"/><rect x="1" y="3.95" width="10.7" height="1.25" fill="#369ae9"/><rect x="1" y="6.90" width="10.7" height="1.25" fill="#369ae9"/><rect x="1" y="9.85" width="10.7" height="1.25" fill="#369ae9"/></svg>
<div style="left:252px;top:735.0999999999999px;width:1493.5px;height:1px;background:#566479;"></div>
<span class="t" style="left:259.78px;top:746.86px;font-size:12.8px;color:#f4f7fa;transform:scaleX(0.8332);-webkit-text-stroke:0.35px #f4f7fa;">70001</span>
<span class="t" style="left:414.77px;top:746.86px;font-size:12.8px;color:#f4f7fa;transform:scaleX(0.9329);-webkit-text-stroke:0.35px #f4f7fa;">fx_forex_aardvark</span>
<span class="t" style="left:853.77px;top:746.86px;font-size:12.8px;color:#f4f7fa;transform:scaleX(0.9220);-webkit-text-stroke:0.35px #f4f7fa;">9</span>
<span class="t" style="left:937.77px;top:746.86px;font-size:12.8px;color:#f4f7fa;transform:scaleX(0.9220);-webkit-text-stroke:0.35px #f4f7fa;">0</span>
<span class="t" style="left:1247.98px;top:746.86px;font-size:12.8px;color:#f4f7fa;transform:scaleX(0.9200);-webkit-text-stroke:0.35px #f4f7fa;">an hour ago</span>
<span class="t" style="left:1403.37px;top:746.86px;font-size:12.8px;color:#f4f7fa;transform:scaleX(0.9220);-webkit-text-stroke:0.35px #f4f7fa;">0</span>
<span class="t" style="left:1558.57px;top:746.86px;font-size:12.8px;color:#f4f7fa;transform:scaleX(0.8332);-webkit-text-stroke:0.35px #f4f7fa;">18337</span>
<svg style="left:1714.00px;top:744.60px" width="13" height="13" viewBox="0 0 13 13"><rect x="1" y="1.00" width="10.7" height="1.25" fill="#369ae9"/><rect x="1" y="3.95" width="10.7" height="1.25" fill="#369ae9"/><rect x="1" y="6.90" width="10.7" height="1.25" fill="#369ae9"/><rect x="1" y="9.85" width="10.7" height="1.25" fill="#369ae9"/></svg>
<div style="left:252px;top:767.5px;width:1493.5px;height:1px;background:#566479;"></div>
<span class="t" style="left:259.78px;top:779.26px;font-size:12.8px;color:#f4f7fa;transform:scaleX(0.8332);-webkit-text-stroke:0.35px #f4f7fa;">70001</span>
<span class="t" style="left:414.77px;top:779.26px;font-size:12.8px;color:#f4f7fa;transform:scaleX(0.9329);-webkit-text-stroke:0.35px #f4f7fa;">fx_forex_aardvark</span>
<span class="t" style="left:853.77px;top:779.26px;font-size:12.8px;color:#f4f7fa;transform:scaleX(0.7144);-webkit-text-stroke:0.35px #f4f7fa;">10</span>
<span class="t" style="left:937.77px;top:779.26px;font-size:12.8px;color:#f4f7fa;transform:scaleX(0.9220);-webkit-text-stroke:0.35px #f4f7fa;">0</span>
<span class="t" style="left:1247.98px;top:779.26px;font-size:12.8px;color:#f4f7fa;transform:scaleX(0.9349);-webkit-text-stroke:0.35px #f4f7fa;">4 minutes ago</span>
<span class="t" style="left:1403.37px;top:779.26px;font-size:12.8px;color:#f4f7fa;transform:scaleX(0.9220);-webkit-text-stroke:0.35px #f4f7fa;">0</span>
<span class="t" style="left:1558.57px;top:779.26px;font-size:12.8px;color:#f4f7fa;transform:scaleX(0.8332);-webkit-text-stroke:0.35px #f4f7fa;">18379</span>
<svg style="left:1714.00px;top:777.00px" width="13" height="13" viewBox="0 0 13 13"><rect x="1" y="1.00" width="10.7" height="1.25" fill="#369ae9"/><rect x="1" y="3.95" width="10.7" height="1.25" fill="#369ae9"/><rect x="1" y="6.90" width="10.7" height="1.25" fill="#369ae9"/><rect x="1" y="9.85" width="10.7" height="1.25" fill="#369ae9"/></svg>
<div style="left:252px;top:799.9px;width:1493.5px;height:1px;background:#566479;"></div>
<span class="t" style="left:259.78px;top:811.66px;font-size:12.8px;color:#f4f7fa;transform:scaleX(0.8332);-webkit-text-stroke:0.35px #f4f7fa;">70001</span>
<span class="t" style="left:414.77px;top:811.66px;font-size:12.8px;color:#f4f7fa;transform:scaleX(0.9329);-webkit-text-stroke:0.35px #f4f7fa;">fx_forex_aardvark</span>
<span class="t" style="left:853.77px;top:811.66px;font-size:12.8px;color:#f4f7fa;transform:scaleX(0.6000);-webkit-text-stroke:0.35px #f4f7fa;">11</span>
<span class="t" style="left:937.77px;top:811.66px;font-size:12.8px;color:#f4f7fa;transform:scaleX(0.9220);-webkit-text-stroke:0.35px #f4f7fa;">0</span>
<span class="t" style="left:1247.98px;top:811.66px;font-size:12.8px;color:#f4f7fa;transform:scaleX(0.8995);-webkit-text-stroke:0.35px #f4f7fa;">15 minutes ago</span>
<span class="t" style="left:1403.37px;top:811.66px;font-size:12.8px;color:#f4f7fa;transform:scaleX(0.9220);-webkit-text-stroke:0.35px #f4f7fa;">0</span>
<span class="t" style="left:1558.57px;top:811.66px;font-size:12.8px;color:#f4f7fa;transform:scaleX(0.8332);-webkit-text-stroke:0.35px #f4f7fa;">18370</span>
<svg style="left:1714.00px;top:809.40px" width="13" height="13" viewBox="0 0 13 13"><rect x="1" y="1.00" width="10.7" height="1.25" fill="#369ae9"/><rect x="1" y="3.95" width="10.7" height="1.25" fill="#369ae9"/><rect x="1" y="6.90" width="10.7" height="1.25" fill="#369ae9"/><rect x="1" y="9.85" width="10.7" height="1.25" fill="#369ae9"/></svg>
<div style="left:252px;top:832.3px;width:1493.5px;height:1px;background:#566479;"></div>
<span class="t" style="left:259.78px;top:844.06px;font-size:12.8px;color:#f4f7fa;transform:scaleX(0.8332);-webkit-text-stroke:0.35px #f4f7fa;">70001</span>
<span class="t" style="left:414.77px;top:844.06px;font-size:12.8px;color:#f4f7fa;transform:scaleX(0.9414);-webkit-text-stroke:0.35px #f4f7fa;">fx_forex_albatross</span>
<span class="t" style="left:853.77px;top:844.06px;font-size:12.8px;color:#f4f7fa;transform:scaleX(0.9220);-webkit-text-stroke:0.35px #f4f7fa;">0</span>
<span class="t" style="left:937.77px;top:844.06px;font-size:12.8px;color:#f4f7fa;transform:scaleX(0.9220);-webkit-text-stroke:0.35px #f4f7fa;">0</span>
<span class="t" style="left:1247.98px;top:844.06px;font-size:12.8px;color:#f4f7fa;transform:scaleX(0.9349);-webkit-text-stroke:0.35px #f4f7fa;">3 minutes ago</span>
<span class="t" style="left:1403.37px;top:844.06px;font-size:12.8px;color:#f4f7fa;transform:scaleX(0.9220);-webkit-text-stroke:0.35px #f4f7fa;">0</span>
<span class="t" style="left:1558.57px;top:844.06px;font-size:12.8px;color:#f4f7fa;transform:scaleX(0.8332);-webkit-text-stroke:0.35px #f4f7fa;">18380</span>
<svg style="left:1714.00px;top:841.80px" width="13" height="13" viewBox="0 0 13 13"><rect x="1" y="1.00" width="10.7" height="1.25" fill="#369ae9"/><rect x="1" y="3.95" width="10.7" height="1.25" fill="#369ae9"/><rect x="1" y="6.90" width="10.7" height="1.25" fill="#369ae9"/><rect x="1" y="9.85" width="10.7" height="1.25" fill="#369ae9"/></svg>
<div style="left:252px;top:864.7px;width:1493.5px;height:1px;background:#566479;"></div>
<span class="t" style="left:259.78px;top:876.46px;font-size:12.8px;color:#f4f7fa;transform:scaleX(0.8332);-webkit-text-stroke:0.35px #f4f7fa;">70001</span>
<span class="t" style="left:414.77px;top:876.46px;font-size:12.8px;color:#f4f7fa;transform:scaleX(0.9414);-webkit-text-stroke:0.35px #f4f7fa;">fx_forex_albatross</span>
<span class="t" style="left:853.77px;top:876.46px;font-size:12.8px;color:#f4f7fa;transform:scaleX(0.6000);-webkit-text-stroke:0.35px #f4f7fa;">1</span>
<span class="t" style="left:937.77px;top:876.46px;font-size:12.8px;color:#f4f7fa;transform:scaleX(0.6000);-webkit-text-stroke:0.35px #f4f7fa;">1</span>
<span class="t" style="left:1092.97px;top:876.46px;font-size:12.8px;color:#f4f7fa;transform:scaleX(0.9220);-webkit-text-stroke:0.35px #f4f7fa;">0</span>
<span class="t" style="left:1247.98px;top:876.46px;font-size:12.8px;color:#f4f7fa;transform:scaleX(0.9349);-webkit-text-stroke:0.35px #f4f7fa;">7 minutes ago</span>
<span class="t" style="left:1403.37px;top:876.46px;font-size:12.8px;color:#f4f7fa;transform:scaleX(0.9220);-webkit-text-stroke:0.35px #f4f7fa;">0</span>
<span class="t" style="left:1558.57px;top:876.46px;font-size:12.8px;color:#f4f7fa;transform:scaleX(0.8332);-webkit-text-stroke:0.35px #f4f7fa;">18377</span>
<svg style="left:1714.00px;top:874.20px" width="13" height="13" viewBox="0 0 13 13"><rect x="1" y="1.00" width="10.7" height="1.25" fill="#369ae9"/><rect x="1" y="3.95" width="10.7" height="1.25" fill="#369ae9"/><rect x="1" y="6.90" width="10.7" height="1.25" fill="#369ae9"/><rect x="1" y="9.85" width="10.7" height="1.25" fill="#369ae9"/></svg>
<div style="left:252px;top:897.0999999999999px;width:1493.5px;height:1px;background:#566479;"></div>
<div style="left:1745.3px;top:444px;width:13.7px;height:456px;background:#fafafa;"></div>
<div style="left:1745.3px;top:444px;width:0.8px;height:456px;background:#2c3a50;"></div>
<div style="left:1749.3px;top:445.5px;width:6.5px;height:8px;background:#c1c1c1;border-radius:3.2px;"></div>
</div></body></html>
